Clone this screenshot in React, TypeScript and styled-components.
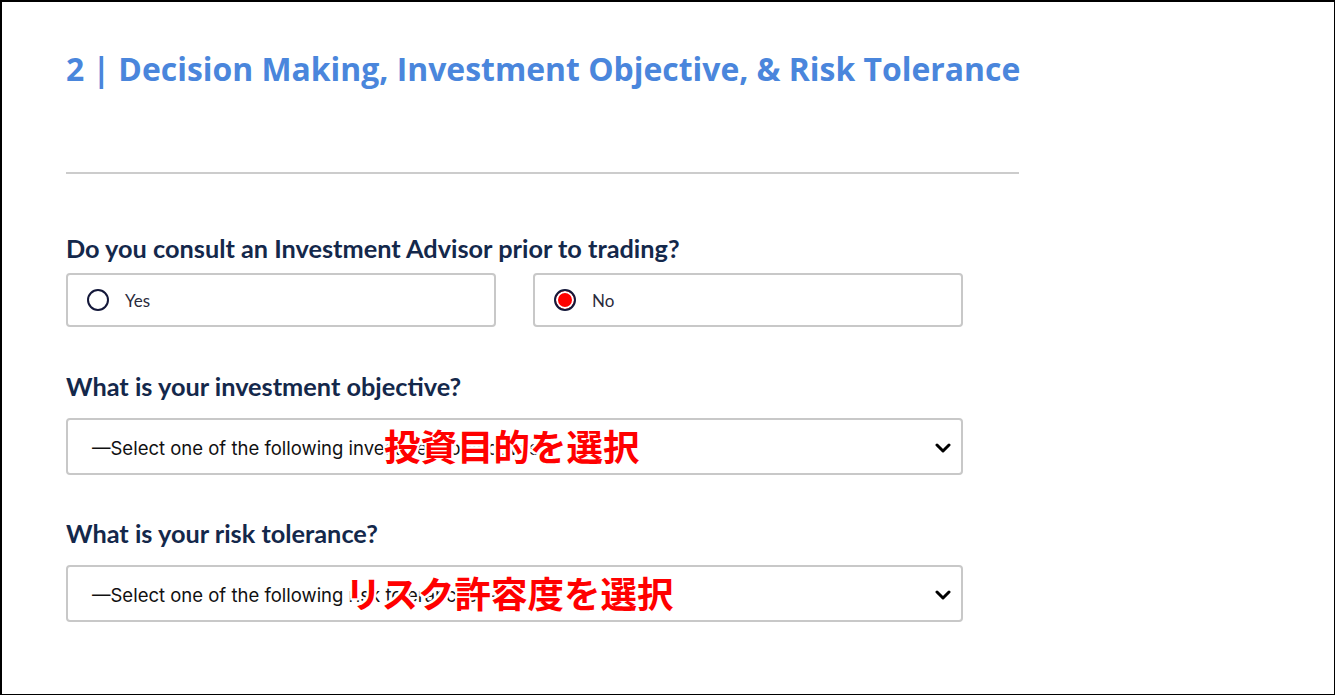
import React, {useState} from "react";
import styled, {createGlobalStyle} from "styled-components";

const GlobalStyle = createGlobalStyle`
    html, body {
        margin: 0;
        padding: 0;
        background: #ffffff;
    }
`

type Option = {
    value: string,
    label: string,
}

const advisorOptions: Option[] = [
    {value: 'yes', label: 'Yes'},
    {value: 'no', label: 'No'},
]

type SelectProps = {
    placeholder: string,
    note: string,
    noteOffset: number,
}

const SelectField: React.FC<SelectProps> = ({placeholder, note, noteOffset}) => (
    <SelectWrap>
        <SelectBox>
            <SelectText>{placeholder}</SelectText>
            <svg width="16" height="10" viewBox="0 0 16 10">
                <path d="M2 2 L8 8 L14 2" fill="none" stroke="#000" strokeWidth="3" strokeLinecap="round" strokeLinejoin="round"/>
            </svg>
        </SelectBox>
        <Note style={{left: noteOffset}}>{note}</Note>
    </SelectWrap>
)

export default function App() {
    const [advisor, setAdvisor] = useState<string>('no');

    return (
        <Page>
            <GlobalStyle/>
            <Section>
                <Title>2 | Decision Making, Investment Objective, &amp; Risk Tolerance</Title>
                <Divider/>

                <Question>Do you consult an Investment Advisor prior to trading?</Question>
                <RadioRow>
                    {advisorOptions.map(o => (
                        <RadioCard key={o.value} onClick={() => setAdvisor(o.value)}>
                            <RadioDot $checked={advisor === o.value}/>
                            <RadioLabel>{o.label}</RadioLabel>
                        </RadioCard>
                    ))}
                </RadioRow>

                <Question $top={44}>What is your investment objective?</Question>
                <SelectField placeholder="—Select one of the following investment objectives—"
                             note="投資目的を選択"
                             noteOffset={318}/>

                <Question $top={43}>What is your risk tolerance?</Question>
                <SelectField placeholder="—Select one of the following risk tolerances—"
                             note="リスク許容度を選択"
                             noteOffset={279}/>
            </Section>
        </Page>
    )
}

const Page = styled.div`
    box-sizing: border-box;
    width: 1335px;
    height: 695px;
    border: 2px solid #000;
    border-right-width: 1px;
    border-bottom-width: 1px;
    padding: 47px 0 0 64px;
`

const Section = styled.div`
    width: 953px;
    display: flex;
    flex-direction: column;
`

const Title = styled.h2`
    margin: 0;
    font-family: "Open Sans", "Noto Sans", sans-serif;
    font-weight: 700;
    font-size: 31.9px;
    line-height: 40px;
    color: #4a86dc;
    white-space: nowrap;
`

const Divider = styled.hr`
    margin: 83px 0 0;
    border: none;
    height: 2px;
    background: #cccccc;
`

const Question = styled.h3<{ $top?: number }>`
    margin: ${p => p.$top ?? 59}px 0 0;
    font-family: Lato, "Noto Sans", sans-serif;
    font-weight: 700;
    font-size: 25.3px;
    line-height: 30px;
    color: #14284b;
    white-space: nowrap;
`

const RadioRow = styled.div`
    margin-top: 10px;
    width: 897px;
    display: grid;
    grid-template-columns: 1fr 1fr;
    column-gap: 37px;
`

const RadioCard = styled.label`
    box-sizing: border-box;
    height: 54px;
    border: 2px solid #c8c8c8;
    border-radius: 4px;
    display: flex;
    align-items: center;
    padding-left: 19px;
    gap: 16px;
    cursor: pointer;
`

const RadioDot = styled.span<{ $checked: boolean }>`
    box-sizing: border-box;
    width: 22px;
    height: 22px;
    border-radius: 50%;
    border: 2px solid #14183a;
    background: ${p => p.$checked ? '#ff0000' : '#ffffff'};
    box-shadow: ${p => p.$checked ? 'inset 0 0 0 2px #ffffff' : 'none'};
`

const RadioLabel = styled.span`
    font-family: Lato, "Noto Sans", sans-serif;
    font-size: 17px;
    color: #2b2b3b;
`

const SelectWrap = styled.div`
    position: relative;
    margin-top: 17px;
    width: 897px;
`

const SelectBox = styled.div`
    box-sizing: border-box;
    height: 57px;
    border: 2px solid #c8c8c8;
    border-radius: 4px;
    display: flex;
    align-items: center;
    justify-content: space-between;
    padding: 3px 10px 0 24px;
`

const SelectText = styled.span`
    font-family: Inter, "Liberation Sans", sans-serif;
    font-size: 18.5px;
    color: #111111;
`

const Note = styled.span`
    position: absolute;
    top: 50%;
    transform: translateY(-52%);
    font-family: "Noto Sans CJK JP", sans-serif;
    font-weight: 700;
    font-size: 36.5px;
    line-height: 1;
    color: #ff0000;
    white-space: nowrap;
    text-shadow: 2px 0 0 #fff, -2px 0 0 #fff, 0 2px 0 #fff, 0 -2px 0 #fff,
    2px 2px 0 #fff, -2px -2px 0 #fff, 2px -2px 0 #fff, -2px 2px 0 #fff;
`
